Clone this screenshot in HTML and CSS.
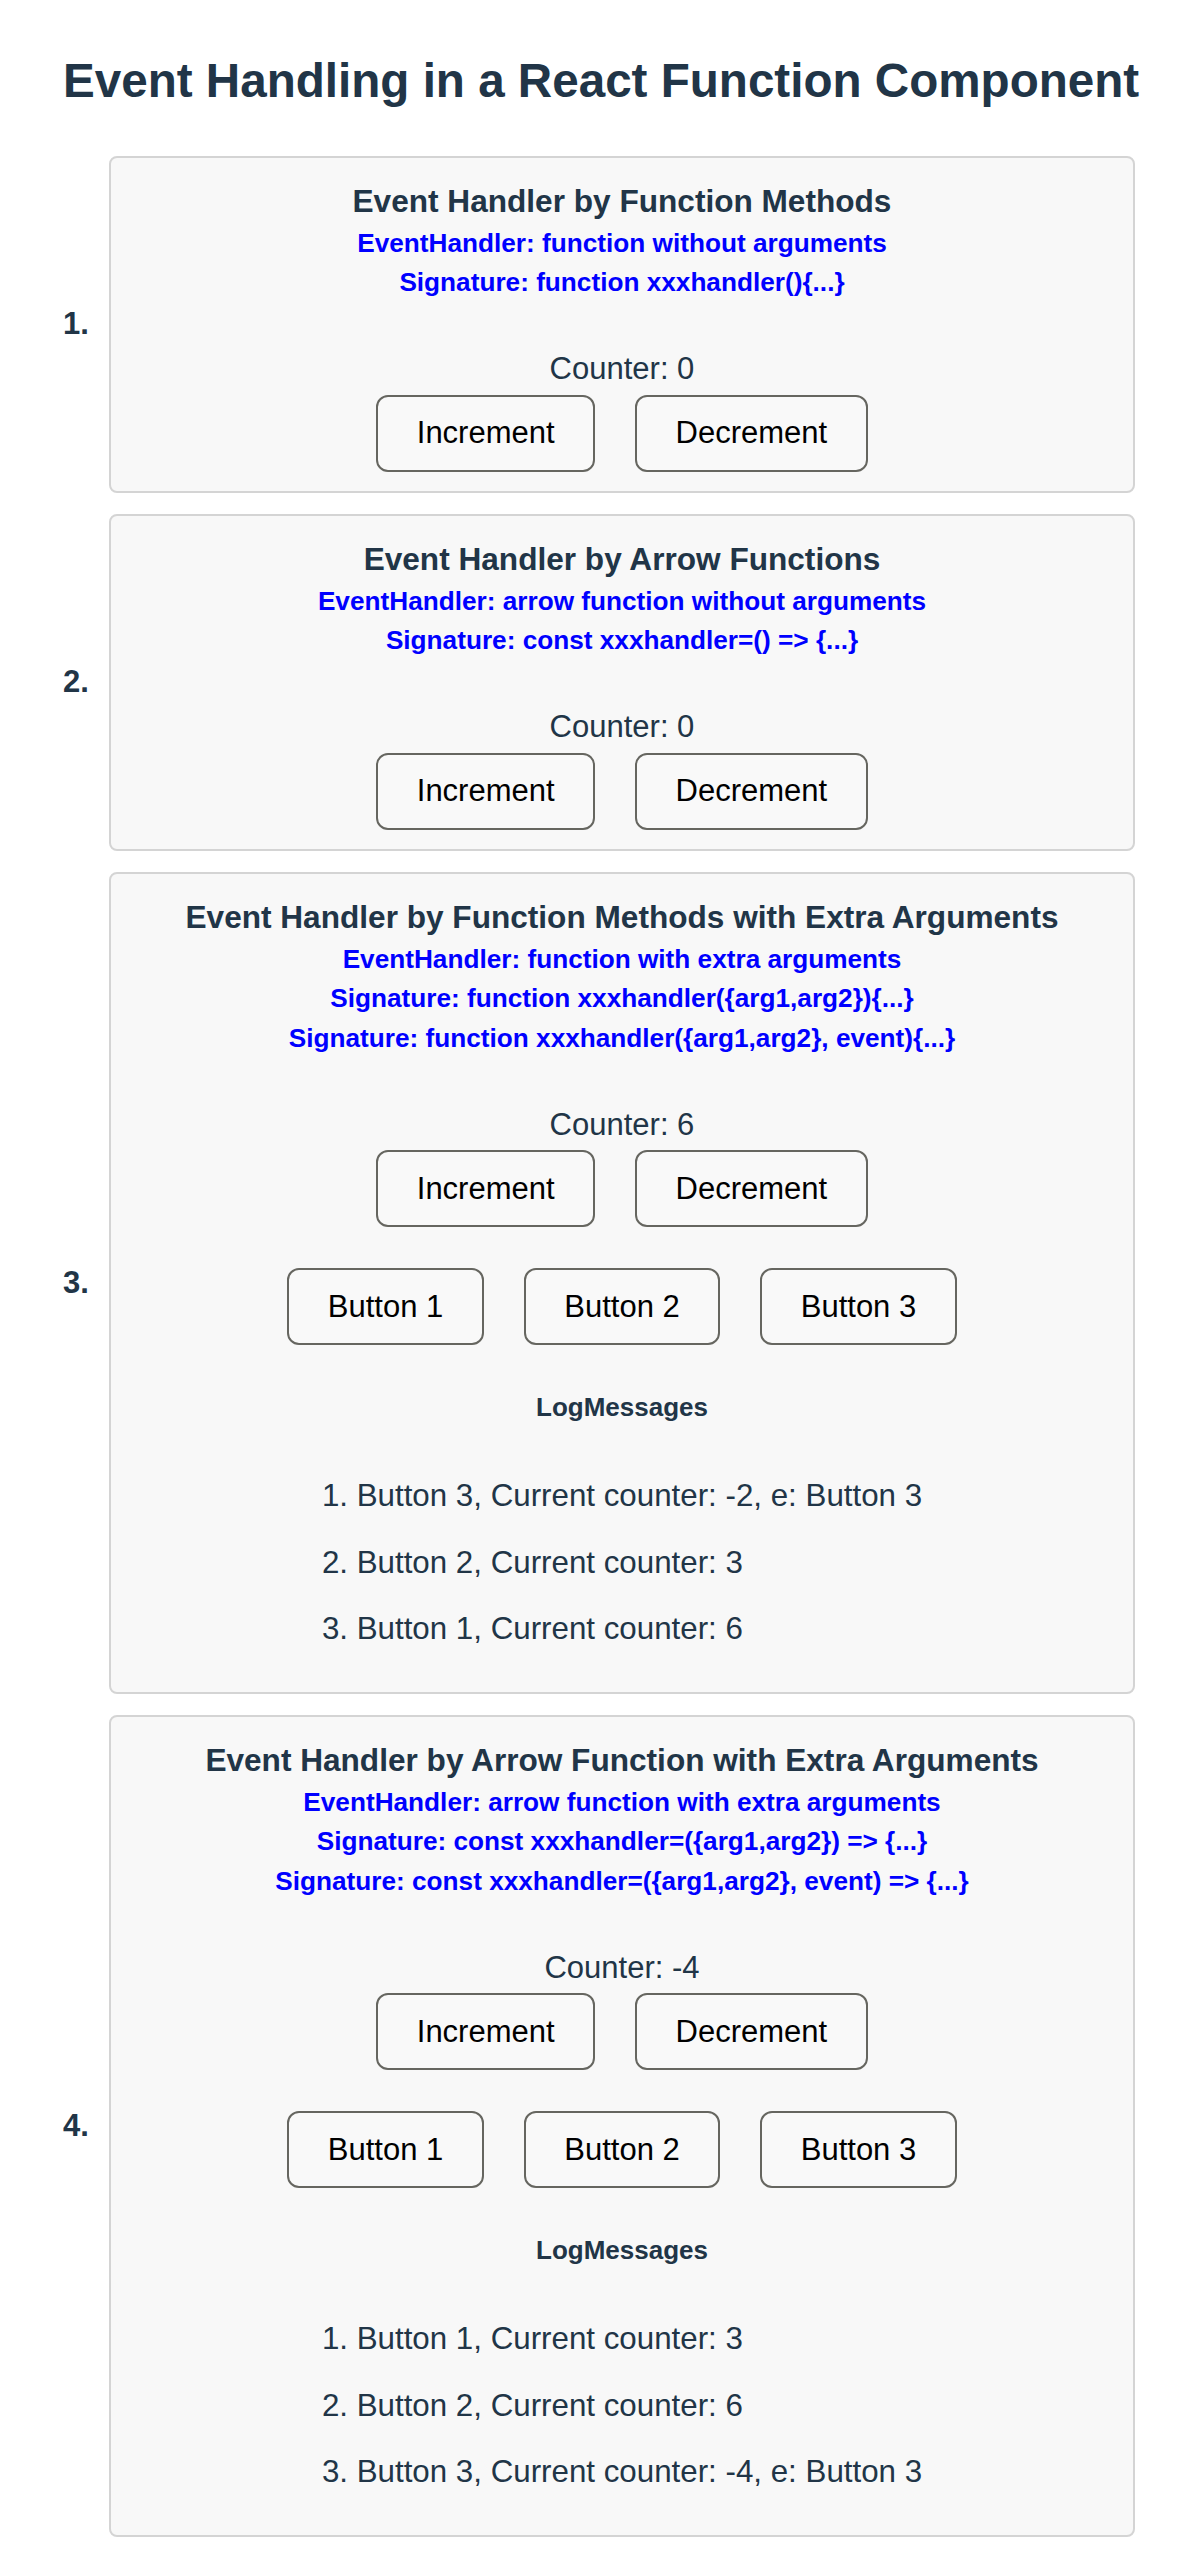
FILE: index.html
```html
<!DOCTYPE html>
<html lang="en">
<head>
<meta charset="utf-8">
<title>Event Handling in a React Function Component</title>
<link rel="stylesheet" href="styles.css">
</head>
<body>
<main class="page">
  <h1 class="page-title">Event Handling in a React Function Component</h1>
  <ol class="examples">
    <li class="example">
      <span class="example-num">1.</span>
      <section class="card">
        <h2 class="card-title">Event Handler by Function Methods</h2>
        <div class="card-desc">
          <p>EventHandler: function without arguments</p>
          <p>Signature: function xxxhandler(){...}</p>
        </div>
        <p class="counter">Counter: 0</p>
        <div class="btn-row">
          <button class="btn">Increment</button>
          <button class="btn">Decrement</button>
        </div>
      </section>
    </li>
    <li class="example">
      <span class="example-num">2.</span>
      <section class="card">
        <h2 class="card-title">Event Handler by Arrow Functions</h2>
        <div class="card-desc">
          <p>EventHandler: arrow function without arguments</p>
          <p>Signature: const xxxhandler=() =&gt; {...}</p>
        </div>
        <p class="counter">Counter: 0</p>
        <div class="btn-row">
          <button class="btn">Increment</button>
          <button class="btn">Decrement</button>
        </div>
      </section>
    </li>
    <li class="example">
      <span class="example-num">3.</span>
      <section class="card">
        <h2 class="card-title">Event Handler by Function Methods with Extra Arguments</h2>
        <div class="card-desc">
          <p>EventHandler: function with extra arguments</p>
          <p>Signature: function xxxhandler({arg1,arg2}){...}</p>
          <p>Signature: function xxxhandler({arg1,arg2}, event){...}</p>
        </div>
        <p class="counter">Counter: 6</p>
        <div class="btn-row">
          <button class="btn">Increment</button>
          <button class="btn">Decrement</button>
        </div>
        <div class="btn-row">
          <button class="btn">Button 1</button>
          <button class="btn">Button 2</button>
          <button class="btn">Button 3</button>
        </div>
        <h3 class="log-title">LogMessages</h3>
        <ol class="log-list">
          <li>Button 3, Current counter: -2, e: Button 3</li>
          <li>Button 2, Current counter: 3</li>
          <li>Button 1, Current counter: 6</li>
        </ol>
      </section>
    </li>
    <li class="example">
      <span class="example-num">4.</span>
      <section class="card">
        <h2 class="card-title">Event Handler by Arrow Function with Extra Arguments</h2>
        <div class="card-desc">
          <p>EventHandler: arrow function with extra arguments</p>
          <p>Signature: const xxxhandler=({arg1,arg2}) =&gt; {...}</p>
          <p>Signature: const xxxhandler=({arg1,arg2}, event) =&gt; {...}</p>
        </div>
        <p class="counter">Counter: -4</p>
        <div class="btn-row">
          <button class="btn">Increment</button>
          <button class="btn">Decrement</button>
        </div>
        <div class="btn-row">
          <button class="btn">Button 1</button>
          <button class="btn">Button 2</button>
          <button class="btn">Button 3</button>
        </div>
        <h3 class="log-title">LogMessages</h3>
        <ol class="log-list">
          <li>Button 1, Current counter: 3</li>
          <li>Button 2, Current counter: 6</li>
          <li>Button 3, Current counter: -4, e: Button 3</li>
        </ol>
      </section>
    </li>
  </ol>
</main>
</body>
</html>
```
FILE: styles.css
```css
* {
  box-sizing: border-box;
}

body {
  margin: 0;
  background: #ffffff;
  color: #213547;
  font-family: "Liberation Sans", Arial, Helvetica, sans-serif;
}

.page {
  padding: 52.8px 65px 20px 63px;
}

.page-title {
  margin: 0 0 47.2px;
  font-size: 47.6px;
  line-height: 56px;
  font-weight: 700;
  text-align: center;
  white-space: nowrap;
}

.examples {
  list-style: none;
  margin: 0;
  padding: 0;
  display: flex;
  flex-direction: column;
  gap: 21px;
}

.example {
  display: flex;
  align-items: center;
  gap: 20px;
}

.example-num {
  flex: none;
  width: 26px;
  font-size: 31px;
  line-height: 36px;
  font-weight: 700;
}

.card {
  flex: 1;
  background: #f8f8f8;
  border: 2px solid #d4d4d4;
  border-radius: 8px;
  padding: 25px 20px 19px;
  text-align: center;
}

.card-title {
  margin: 0;
  font-size: 31.6px;
  line-height: 36px;
  font-weight: 700;
}

.card-desc {
  margin-top: 5px;
  color: #0000ff;
  font-size: 26.2px;
  line-height: 39.5px;
  font-weight: 700;
}

.card-desc p {
  margin: 0;
}

.counter {
  margin: 48.5px 0 0;
  font-size: 31px;
  line-height: 36px;
}

.btn-row {
  display: flex;
  justify-content: center;
  gap: 40px;
  margin-top: 7.5px;
}

.btn-row + .btn-row {
  margin-top: 41px;
}

.btn {
  font-family: inherit;
  font-size: 31px;
  line-height: 36px;
  font-weight: 400;
  padding: 18.5px 38.5px;
  border: 2px solid #666660;
  border-radius: 12px;
  background: #f9f9f9;
  color: #000000;
}

.log-title {
  margin: 47px 0 0;
  font-size: 26px;
  line-height: 30px;
  font-weight: 700;
}

.log-list {
  width: fit-content;
  margin: 55.6px auto 25.5px;
  padding: 0;
  list-style: decimal inside;
  text-align: left;
  font-size: 31.3px;
  line-height: 36px;
}

.log-list li + li {
  margin-top: 30.7px;
}
```
